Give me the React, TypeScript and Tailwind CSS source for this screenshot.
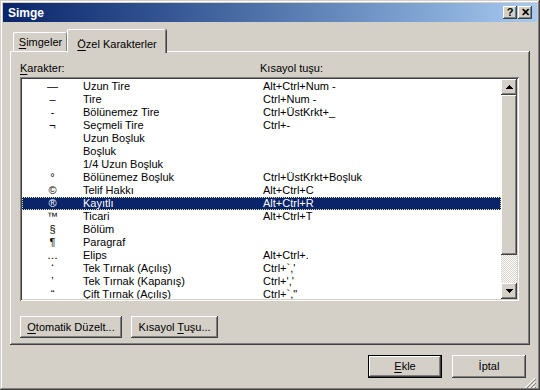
import type { ReactNode } from "react"

const raised =
  "shadow-[inset_-1px_-1px_#404040,inset_1px_1px_#ffffff,inset_-2px_-2px_#808080,inset_2px_2px_#d4d0c8]"

const rows: [string, string, string][] = [
  ["—", "Uzun Tire", "Alt+Ctrl+Num -"],
  ["–", "Tire", "Ctrl+Num -"],
  ["-", "Bölünemez Tire", "Ctrl+ÜstKrkt+_"],
  ["¬", "Seçmeli Tire", "Ctrl+-"],
  ["", "Uzun Boşluk", ""],
  ["", "Boşluk", ""],
  ["", "1/4 Uzun Boşluk", ""],
  ["°", "Bölünemez Boşluk", "Ctrl+ÜstKrkt+Boşluk"],
  ["©", "Telif Hakkı", "Alt+Ctrl+C"],
  ["®", "Kayıtlı", "Alt+Ctrl+R"],
  ["™", "Ticari", "Alt+Ctrl+T"],
  ["§", "Bölüm", ""],
  ["¶", "Paragraf", ""],
  ["…", "Elips", "Alt+Ctrl+."],
  ["‘", "Tek Tırnak (Açılış)", "Ctrl+`,'"],
  ["’", "Tek Tırnak (Kapanış)", "Ctrl+','"],
  ["“", "Çift Tırnak (Açılış)", "Ctrl+`,\""],
]

const SELECTED = 9

function U({ children }: { children: ReactNode }) {
  return <span className="underline underline-offset-[2px]">{children}</span>
}

function Arrow({ down }: { down?: boolean }) {
  return (
    <svg width="7" height="4" viewBox="0 0 7 4" className={down ? "rotate-180" : ""}>
      <path d="M3 0h1v1h1v1h1v1h1v1H0V3h1V2h1V1h1z" fill="#000" />
    </svg>
  )
}

function CaptionButton({ children }: { children: ReactNode }) {
  return (
    <div
      className={`flex h-[13px] w-[14px] items-center justify-center bg-[#d4d0c8] text-[11px] font-bold leading-none text-black ${raised}`}
    >
      {children}
    </div>
  )
}

export default function App() {
  return (
    <div className="h-[390px] w-[540px] bg-white">
      <div className="flex h-[390px] w-[540px] flex-col bg-[#d4d0c8] p-[3px] font-['Liberation_Sans',Arial,sans-serif] text-[11px] text-black shadow-[inset_-1px_-1px_#404040,inset_1px_1px_#d4d0c8,inset_-2px_-2px_#808080,inset_2px_2px_#ffffff]">
        {/* title bar */}
        <div className="flex h-[19px] items-center justify-between bg-gradient-to-r from-[#0a246a] to-[#a6caf0] pl-[5px] pr-[5px]">
          <span className="text-[12px] font-bold text-white">Simge</span>
          <div className="flex gap-[1px]">
            <CaptionButton>?</CaptionButton>
            <CaptionButton>✕</CaptionButton>
          </div>
        </div>

        <div className="flex flex-1 flex-col px-[7px] pt-[7px]">
          {/* tabs */}
          <div className="flex h-[22px] items-end pl-[3px]">
            <div className="flex h-[19px] w-[54px] items-start justify-center rounded-t-[2px] border-l border-t border-white pt-[3px] leading-[13px] [box-shadow:inset_-1px_0_#808080,1px_0_#404040]">
              <span>
                <U>S</U>imgeler
              </span>
            </div>
            <div className="relative z-10 -mb-[2px] flex h-[24px] w-[99px] items-start justify-center rounded-t-[2px] border-l border-t border-white bg-[#d4d0c8] pt-[6px] [box-shadow:inset_-1px_0_#808080,1px_0_#404040]">
              <span>
                <U>Ö</U>zel Karakterler
              </span>
            </div>
          </div>

          {/* page */}
          <div className="flex h-[294px] flex-col px-[10px] pt-[10px] shadow-[inset_-1px_-1px_#404040,inset_1px_1px_#ffffff,inset_-2px_-2px_#808080]">
            <div className="flex h-[14px] items-center">
              <span className="w-[240px]">
                <U>K</U>arakter:
              </span>
              <span>Kısayol tuşu:</span>
            </div>

            <div className="mt-[2px] flex h-[224px] w-[499px] bg-white p-[2px] shadow-[inset_1px_1px_#808080,inset_-1px_-1px_#ffffff,inset_2px_2px_#404040,inset_-2px_-2px_#d4d0c8]">
              <div className="flex-1 overflow-hidden pt-[1px]">
                {rows.map(([sym, name, keys], i) => (
                  <div
                    key={name}
                    className={`flex h-[13px] items-center leading-[13px] ${
                      i === SELECTED
                        ? "bg-[#0a246a] text-white outline-1 -outline-offset-1 outline-dotted outline-[#e8e0a0]"
                        : ""
                    }`}
                  >
                    <span className="w-[61px] text-center">{sym}</span>
                    <span className="w-[180px]">{name}</span>
                    <span>{keys}</span>
                  </div>
                ))}
              </div>
              <div className="flex w-[16px] flex-col">
                <div className={`flex h-[16px] items-center justify-center bg-[#d4d0c8] ${raised}`}>
                  <Arrow />
                </div>
                <div className={`h-[160px] bg-[#d4d0c8] ${raised}`} />
                <div className="flex-1 bg-[repeating-conic-gradient(#ffffff_0_25%,#d4d0c8_0_50%)] bg-[length:2px_2px]" />
                <div className={`flex h-[16px] items-center justify-center bg-[#d4d0c8] ${raised}`}>
                  <Arrow down />
                </div>
              </div>
            </div>

            <div className="mt-[15px] flex gap-[9px]">
              <button className={`flex h-[22px] w-[102px] items-center justify-center ${raised}`}>
                <span>
                  <U>O</U>tomatik Düzelt...
                </span>
              </button>
              <button className={`flex h-[22px] w-[87px] items-center justify-center ${raised}`}>
                <span>
                  Kısayol <U>T</U>uşu...
                </span>
              </button>
            </div>
          </div>

          {/* footer */}
          <div className="relative mt-[10px] flex justify-end gap-[10px] pr-[4px]">
            <button className="h-[23px] w-[74px] border border-black">
              <div className={`flex h-full items-center justify-center ${raised}`}>
                <span>
                  <U>E</U>kle
                </span>
              </div>
            </button>
            <button className={`flex h-[23px] w-[74px] items-center justify-center ${raised}`}>
              İptal
            </button>
            <svg
              width="12"
              height="12"
              viewBox="0 0 12 12"
              className="absolute -bottom-[11px] -right-[6px]"
            >
              <path d="M11 1L1 11M11 5L5 11M11 9L9 11" stroke="#ffffff" strokeWidth="1" />
              <path d="M12 2L2 12M12 6L6 12M12 10L10 12" stroke="#808080" strokeWidth="1" />
            </svg>
          </div>
        </div>
      </div>
    </div>
  )
}
